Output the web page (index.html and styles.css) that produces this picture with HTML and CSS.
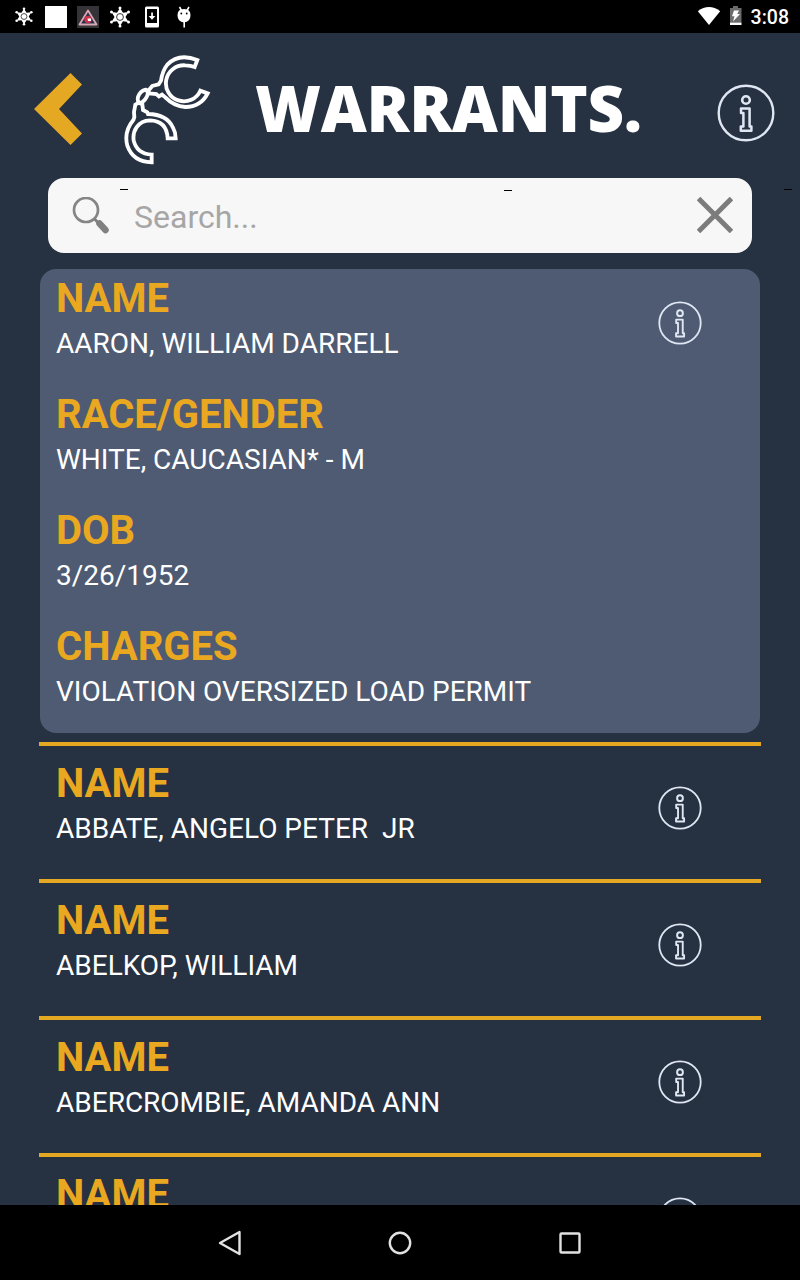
FILE: index.html
```html
<!DOCTYPE html>
<html lang="en">
<head>
    <meta charset="UTF-8">
    <meta name="viewport" content="width=device-width, initial-scale=1.0">
    <title>Warrants</title>
    <link rel="stylesheet" href="styles.css">
</head>
<body>
    <svg class="defs">
        <symbol id="info" viewBox="0 0 58 58">
            <circle cx="29" cy="29" r="27.3" stroke-width="2.400"/>
            <circle cx="29" cy="16" r="3.800" stroke-width="2.600"/>
            <path d="M24 24.500h8.600v18h1.800v4.300H23.800v-4.300h2.600V29H24z" stroke-width="2.500" stroke-linejoin="round"/>
        </symbol>
        <symbol id="star" viewBox="0 0 22 22">
            <path d="M11 2l3 4.800 5.500-.8-3 5 3 5-5.500-.8-3 4.800-3-4.800-5.500.8 3-5-3-5 5.500.8z" fill="#fff"/>
            <g fill="#fff"><circle cx="11" cy="2" r="1.500"/><circle cx="11" cy="20" r="1.500"/><circle cx="2.500" cy="6" r="1.500"/><circle cx="19.500" cy="6" r="1.500"/><circle cx="2.500" cy="16" r="1.500"/><circle cx="19.500" cy="16" r="1.500"/></g>
            <circle cx="11" cy="11" r="3.400" fill="#fff" stroke="#333" stroke-width="1"/>
        </symbol>
    </svg>

    <div class="status-bar">
        <div class="notifications">
            <svg class="star-small"><use href="#star"/></svg>
            <div class="white-box"></div>
            <svg width="22" height="22" viewBox="0 0 22 22">
                <rect width="22" height="22" fill="#343438"/>
                <path d="M11 4.500L19.500 18.500H2.500z" fill="#25304c" stroke="#d9a6b4" stroke-width="1.800" stroke-linejoin="round"/>
                <circle cx="11" cy="13.500" r="3.700" fill="#c8324a"/>
                <path d="M10.500 12.500h3.500v2.500h-3z" fill="#fff"/>
            </svg>
            <svg class="star"><use href="#star"/></svg>
            <svg width="22" height="22" viewBox="0 0 22 22">
                <path fill="#fff" fill-rule="evenodd" d="M5.500.5h11q1.500 0 1.500 1.500v18q0 1.500-1.500 1.500h-11Q4 21.500 4 20V2Q4 .5 5.500.5zM6 3v14h10V3z"/>
                <path d="M10.200 6.500h1.700V10h2.500L11 13.700 7.600 10h2.600z" fill="#fff"/>
            </svg>
            <svg width="22" height="22" viewBox="0 0 22 22">
                <path d="M6.500 1l2 3.500M16 1l-2 3.500M11.200 15v6.500" stroke="#fff" stroke-width="1.600" fill="none"/>
                <path d="M4.500 9Q4.500 3 11 3T17.500 9q0 7-6.500 7.500Q4.500 16 4.500 9z" fill="#fff"/>
                <circle cx="8.300" cy="7.500" r=".9" fill="#000"/><circle cx="13.700" cy="7.500" r=".9" fill="#000"/>
            </svg>
        </div>
        <div class="system">
            <svg width="24" height="19" viewBox="0 0 24 19"><path d="M.8 4.200Q12-4.200 23.200 4.200L12 18z" fill="#fff"/></svg>
            <svg class="battery" width="14" height="20" viewBox="0 0 14 20">
                <path d="M1 2h3V0h5v2h3.500v14.500H1z" fill="#6b6b6b"/>
                <path d="M1 16.500h11.500V19H1z" fill="#fff"/>
                <path d="M5 4.500h5L8.200 8H11l-7 7.500 1.500-5.300H3z" fill="#fff"/>
            </svg>
            <span class="clock">3:08</span>
        </div>
    </div>

    <div class="screen">
        <div class="header">
            <svg class="back" width="48" height="72" viewBox="0 0 48 72"><path d="M36.500 0L48 11.500 25 36 48 60.500 36.500 72 0 36z" fill="#e5a823"/></svg>
            <!-- handcuffs -->
            <svg class="cuffs" width="90" height="114" viewBox="310 35 270 342">
                <g fill="none" stroke="#fff" stroke-width="11.500">
                    <path d="M536 59L528 80Q516 75 500 75A54 54 0 1 0 545 151L567 159Q547 199 500 200Q465 197 440 171L430 163 421 168 413 161 393 159 388 152 401 137 420 132 427 121Q431 92 446 73Q480 37 536 59Z"/>
                    <path d="M381 148Q389 151 387 163Q381 181 366 188Q354 185 358 170Q365 151 381 148Z"/>
                    <path d="M360 187L371 192 373 209 386 216 388 221Q445 222 463 262Q471 276 471 294H447Q444 241 394 240C357 241 341 273 345 300Q354 340 399 343V366Q343 365 326 316C317 282 329 257 344 239L347 231 346 215 350 193Z"/>
                </g>
            </svg>
            <h1>WARRANTS.</h1>
            <svg class="info info-big"><use href="#info"/></svg>
        </div>

        <div class="search">
            <svg width="38" height="38" viewBox="0 0 38 38">
                <circle cx="14" cy="13" r="12" fill="none" stroke="#858585" stroke-width="2.700"/>
                <path d="M22.500 22l4 4" stroke="#808080" stroke-width="3"/>
                <path d="M27.500 26.500L33.500 33" stroke="#808080" stroke-width="6.500" stroke-linecap="round"/>
            </svg>
            <input type="text" placeholder="Search...">
            <svg class="clear" width="36" height="36" viewBox="0 0 36 36"><path d="M1.500 1.500l33 33M34.500 1.500l-33 33" stroke="#7c7c7c" stroke-width="5"/></svg>
            <span class="dash dash-left"></span>
            <span class="dash dash-middle"></span>
            <span class="dash dash-right"></span>
        </div>

        <div class="list">
            <div class="card open">
                <div class="details">
                    <div class="field"><h2>NAME</h2><p>AARON, WILLIAM DARRELL</p></div>
                    <div class="field"><h2>RACE/GENDER</h2><p>WHITE, CAUCASIAN* - M</p></div>
                    <div class="field"><h2>DOB</h2><p>3/26/1952</p></div>
                    <div class="field"><h2>CHARGES</h2><p>VIOLATION OVERSIZED LOAD PERMIT</p></div>
                </div>
                <svg class="info"><use href="#info"/></svg>
            </div>
            <div class="card">
                <div class="field"><h2>NAME</h2><p>ABBATE, ANGELO PETER&nbsp; JR</p></div>
                <svg class="info"><use href="#info"/></svg>
            </div>
            <div class="card">
                <div class="field"><h2>NAME</h2><p>ABELKOP, WILLIAM</p></div>
                <svg class="info"><use href="#info"/></svg>
            </div>
            <div class="card">
                <div class="field"><h2>NAME</h2><p>ABERCROMBIE, AMANDA ANN</p></div>
                <svg class="info"><use href="#info"/></svg>
            </div>
            <div class="card">
                <div class="field"><h2>NAME</h2></div>
                <svg class="info"><use href="#info"/></svg>
            </div>
        </div>
    </div>

    <div class="nav-bar">
        <svg width="24" height="26" viewBox="0 0 24 26"><path d="M21.500 2v22L2 13z"/></svg>
        <svg width="24" height="26" viewBox="0 0 24 26"><circle cx="12" cy="13" r="10.200"/></svg>
        <svg width="24" height="26" viewBox="0 0 24 26"><rect x="2.500" y="3.500" width="19" height="19" rx="1"/></svg>
    </div>
</body>
</html>
```
FILE: styles.css
```css
* {
    box-sizing: border-box;
}

body {
    margin: 0;
    height: 1280px;
    display: flex;
    flex-direction: column;
    font-family: Roboto, sans-serif;
    background: #000;
    color: white;
    overflow: hidden;
}

svg {
    display: block;
    flex-shrink: 0;
}

.defs {
    display: none;
}

/* android status bar */
.status-bar {
    height: 33px;
    flex-shrink: 0;
    display: flex;
    justify-content: space-between;
    padding: 0 11px 0 13px;
}

.notifications {
    display: flex;
    align-items: center;
    gap: 10px;
}

.white-box {
    width: 22px;
    height: 22px;
    background: #fff;
}

.star {
    width: 22px;
    height: 22px;
}

.star-small {
    width: 22px;
    height: 19px;
}

.system {
    display: flex;
    align-items: center;
}

.battery {
    margin: 0 8px 7px 8px;
    align-self: flex-end;
}

.clock {
    font-size: 19.5px;
    line-height: 34px;
    padding-top: 2px;
    font-weight: 500;
}

/* app */
.screen {
    height: 1172px;
    flex-shrink: 0;
    background: #263142;
    overflow: hidden;
}

.header {
    height: 145px;
    display: flex;
    align-items: flex-start;
    padding: 20px 25px 0 34px;
}

.back {
    margin-top: 20px;
}

.cuffs {
    margin-left: 40px;
    margin-top: -1px;
}

h1 {
    margin: 11px 0 0 43px;
    width: 462px;
    font-family: "Open Sans", sans-serif;
    font-size: 63.5px;
    font-weight: 800;
    letter-spacing: -0.3px;
    line-height: 87px;
}

.info {
    width: 44px;
    height: 44px;
    fill: none;
    stroke: #dfe7f3;
}

.info-big {
    width: 58px;
    height: 58px;
    margin-top: 31px;
}

.search {
    position: relative;
    height: 75px;
    margin: 0 48px;
    padding: 0 19px 0 24px;
    display: flex;
    align-items: center;
    background: #f7f7f7;
    border-radius: 16px;
}

.search input {
    flex: 1;
    min-width: 0;
    margin-left: 24px;
    padding: 2px 0 0;
    border: none;
    outline: none;
    background: none;
    font-family: Roboto, sans-serif;
    font-size: 32px;
}

.search input::placeholder {
    color: #a6a6a6;
    opacity: 1;
}

.clear {
    margin-bottom: 1px;
}

.dash {
    position: absolute;
    width: 8px;
    height: 1px;
    background: #000;
}

.dash-left {
    left: 72px;
    top: 11px;
}

.dash-middle {
    left: 456px;
    top: 12px;
}

.dash-right {
    left: 736px;
    top: 11px;
}

.list {
    margin: 16px 39px 0;
}

.card {
    height: 137px;
    display: flex;
    justify-content: space-between;
    border-top: 4px solid #e5a823;
    padding: 14px 59px 0 17px;
}

.card .info {
    margin-top: 26px;
}

.card.open {
    height: 464px;
    margin: 0 1px 8.5px;
    padding: 6px 58px 0 16px;
    border: none;
    border-radius: 16px;
    background: #4e5b72;
}

.field {
    height: 116px;
}

h2 {
    margin: 0 0 5px;
    color: #e9a820;
    font-size: 40px;
    font-weight: bold;
    line-height: 47px;
}

p {
    margin: 0;
    font-size: 28px;
    line-height: 33px;
}

/* android buttons */
.nav-bar {
    height: 75px;
    display: flex;
    justify-content: center;
    align-items: center;
    gap: 146px;
}

.nav-bar svg {
    fill: none;
    stroke: #e2e2e2;
    stroke-width: 2.4;
    stroke-linejoin: round;
}
```
